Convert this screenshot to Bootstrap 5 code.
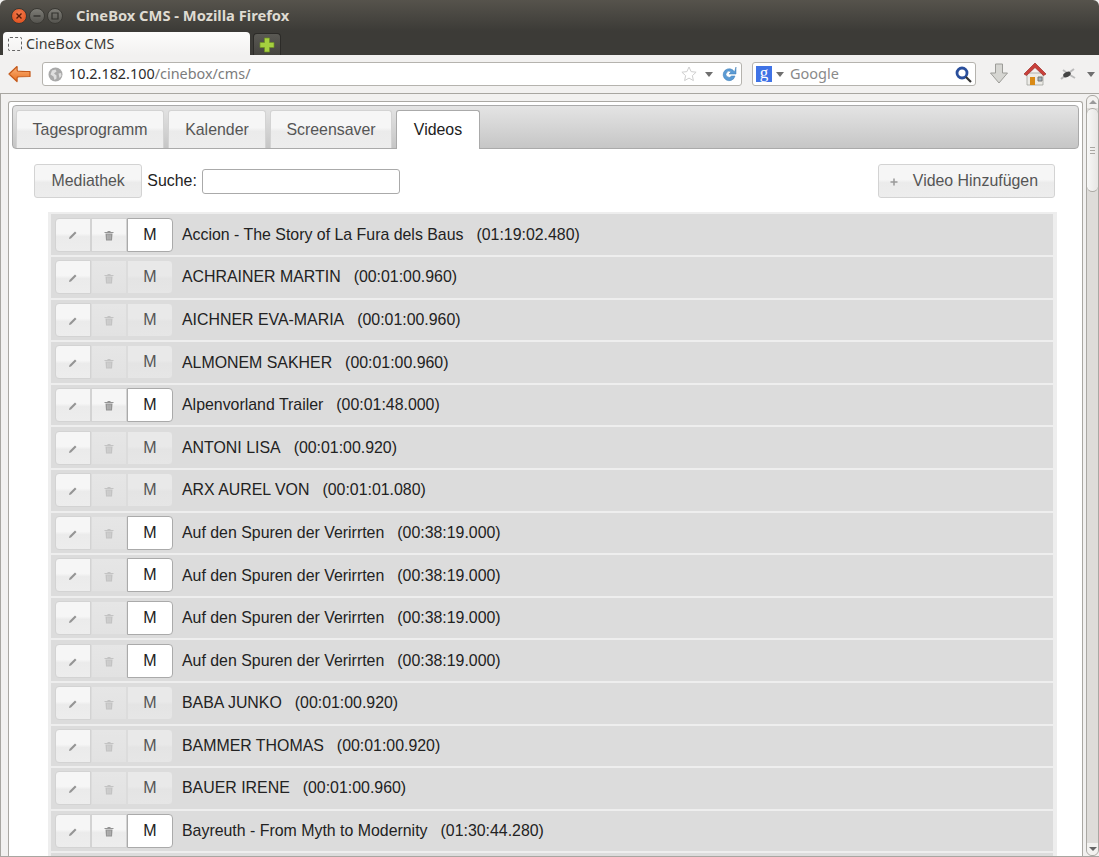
<!DOCTYPE html>
<html lang="de">
<head>
<meta charset="UTF-8" />
<title>CineBox CMS - Mozilla Firefox</title>
<link href="https://cdn.jsdelivr.net/npm/bootstrap@5.3.0/dist/css/bootstrap.min.css" rel="stylesheet" />
<style>
  html, body { height: 857px; overflow: hidden; }
  body { font-family: "Liberation Sans", Arial, sans-serif; font-size: 15.9px; color: #222; background: #f2f1f0; }

  /* window chrome */
  .win-title { height: 31px; background: linear-gradient(#56534c, #3c3b37); padding-left: 11px; gap: 2px; border-top-left-radius: 6px; border-top-right-radius: 6px; }
  .win-dot { width: 16px; height: 16px; border-radius: 50%; background: linear-gradient(#7d7c76, #55544f); border: 1px solid #3a3934; }
  .win-dot.is-close { background: radial-gradient(circle at 50% 35%, #f27c4f, #dd4814); }
  .win-name { font-family: "Noto Sans", "DejaVu Sans", sans-serif; font-weight: 700; font-size: 14.7px; color: #dfdbd2; margin-left: 11px; }
  .tab-strip { height: 24px; background: #3c3b37; padding-left: 3px; gap: 3px; align-items: flex-end; }
  .ff-tab { width: 247px; height: 23px; background: linear-gradient(#fdfdfc, #f2f1f0); border-radius: 4px 4px 0 0; font-family: "Noto Sans", "DejaVu Sans", sans-serif; font-size: 14.3px; color: #3c3b37; padding-left: 5px; gap: 4px; }
  .ff-fav { width: 14px; height: 14px; border: 1px dashed #666; border-radius: 2px; }
  .ff-new { width: 28px; height: 22px; background: linear-gradient(#5a5954, #45443f); border: 1px solid #2c2b28; border-bottom: 0; border-radius: 4px 4px 0 0; }
  .ff-bar { height: 39px; background: #f2f1f0; border-bottom: 1px solid #a8a6a1; padding-left: 8px; }
  .ff-url { width: 700px; height: 24px; margin-left: 11px; background: #fff; border: 1px solid #b5b3ae; border-radius: 3px; font-family: "Noto Sans", "DejaVu Sans", sans-serif; font-size: 14.4px; padding: 0 4px 0 5px; color: #2d2d2d; }
  .ff-url .url-rest { color: #7c7c7c; margin: 0; }
  .url-text { margin-left: 2px; }
  .ff-search { width: 224px; height: 24px; margin-left: 10px; background: #fff; border: 1px solid #b5b3ae; border-radius: 3px; font-family: "Noto Sans", "DejaVu Sans", sans-serif; font-size: 14.5px; color: #8a8a8a; padding: 0 3px; }
  .search-name { margin-left: 6px; }
  .ff-g { width: 16px; height: 16px; background: #3f73e6; color: #fff; font: 400 17px/13px "Liberation Serif", serif; text-align: center; }
  .ff-drop { width: 0; height: 0; border-left: 4px solid transparent; border-right: 4px solid transparent; border-top: 5px solid #6f6f6f; }
  .ico-dl { margin-left: 14px; }
  .ico-home { margin-left: 15px; }
  .ico-bug { margin-left: 12px; }
  .ico-more { margin-left: 10px; }

  /* page frame */
  .ff-content { height: 763px; background: #f2f1f0; border-left: 1px solid #a8a6a1; border-bottom: 1px solid #a8a6a1; padding-left: 7px; }
  .ff-frame { flex: 0 0 1075px; margin-top: 7px; background: #fff; border: 1px solid #aaa8a3; border-bottom: 0; border-radius: 3px 3px 0 0; padding: 3px 3px 0 3px; overflow: hidden; }
  .ff-scroll { width: 13px; margin: 1px 0 0 3px; border: 1px solid #aaa8a3; border-radius: 6px; background: #dedcd9; }
  .ff-scroll-end { height: 12px; background: #f3f2f0; }
  .ff-scroll-thumb { height: 84px; background: linear-gradient(90deg, #f7f7f6, #e7e6e4); border: 1px solid #aaa8a3; border-width: 1px 0; border-radius: 6px; }
  .ff-grip { width: 5px; height: 7px; margin-top: 38px; background: repeating-linear-gradient(#a9a7a2 0 1px, transparent 1px 3px); }
  .ff-up, .ff-down { width: 0; height: 0; border-left: 4px solid transparent; border-right: 4px solid transparent; }
  .ff-up { border-bottom: 4px solid #9a9a9a; }
  .ff-down { border-top: 4px solid #666; }

  /* app */
  .tab-panel { height: 44px; background: linear-gradient(#e4e4e4, #c6c6c6); border: 1px solid #aaa; border-radius: 4px; padding: 4px 0 0 3px; gap: 4px; }
  .app-tab, .app-btn { background: linear-gradient(#f6f6f6 45%, #ebebeb 55%, #ededed); border: 1px solid #d3d3d3; color: #555; font-size: 15.9px; }
  .app-tab { height: 38px; border-bottom: 0; border-radius: 3px 3px 0 0; line-height: 37px; text-align: center; }
  .app-tab:nth-child(1) { width: 148px; }
  .app-tab:nth-child(2) { width: 98px; }
  .app-tab:nth-child(3) { width: 122px; }
  .app-tab:nth-child(4) { width: 84px; }
  .app-tab.is-on { height: 39px; background: #fff; border: 1px solid #aaa; border-bottom: 0; color: #212121; }
  .tool-row { margin: 15px 0 14px 22px; width: 1021px; height: 34px; }
  .app-btn { height: 34px; padding: 0 16.5px; border-radius: 3px; }
  .app-btn.with-icon { padding: 0 16px 0 11px; }
  .app-btn.with-icon svg { margin-right: 10px; }
  .search-label { margin-left: 5px; }
  .search-box { width: 198px; height: 25px; min-height: 0; padding: 0 4px; border: 1px solid #aaa; border-radius: 3px; margin-left: 5px; }
  .video-list { margin-left: 36px; width: 1009px; background: #eee; padding: 2px 4px 0 3px; }
  .video-row { height: 40.6px; margin-bottom: 2px; background: #dcdcdc; padding-left: 4px; color: #222; }
  .video-row:first-child { height: 41px; }
  .row-tools { width: 118px; height: 34px; margin-right: 9px; }
  .row-tool { width: 36px; height: 34px; padding: 0; border: 1px solid #d3d3d3; background: linear-gradient(#f6f6f6 45%, #ebebeb 55%, #ededed); border-radius: 0; }
  .row-tool:first-child { border-radius: 4px 0 0 4px; }
  .row-tool.is-off { background: linear-gradient(#e6e6e6, #e2e2e2); border-color: #dcdcdc; }
  .row-tool.is-off svg { opacity: .4; }
  .row-m { width: 46px; height: 34px; padding: 0; font-size: 16px; color: #555; background: linear-gradient(#e9e9e9 45%, #e4e4e4 55%, #e6e6e6); border: 1px solid #dcdcdc; border-radius: 0 4px 4px 0; }
  .row-m.is-on { background: #fff; border-color: #aaa; color: #212121; }
  .row-time { margin-left: 13px; }
</style>
</head>
<body>
  <div class="win-title d-flex align-items-center">
    <span class="win-dot is-close d-flex align-items-center justify-content-center">
      <svg width="8" height="8" viewBox="0 0 8 8"><path d="M1.500 1.500l5 5M6.500 1.500l-5 5" stroke="#5a1c08" stroke-width="1.400"/></svg>
    </span>
    <span class="win-dot d-flex align-items-center justify-content-center">
      <svg width="8" height="8" viewBox="0 0 8 8"><path d="M.5 4h7" stroke="#33322e" stroke-width="1.400"/></svg>
    </span>
    <span class="win-dot d-flex align-items-center justify-content-center">
      <svg width="8" height="8" viewBox="0 0 8 8"><path d="M1 1h6v6H1z" fill="none" stroke="#33322e" stroke-width="1.200"/></svg>
    </span>
    <span class="win-name">CineBox CMS - Mozilla Firefox</span>
  </div>
  <div class="tab-strip d-flex">
    <div class="ff-tab d-flex align-items-center"><span class="ff-fav"></span>CineBox CMS</div>
    <div class="ff-new d-flex align-items-center justify-content-center">
      <svg width="16" height="16" viewBox="0 0 16 16"><path d="M5.500 1h5v4.500h4.500v5h-4.500v4.500h-5v-4.500h-4.500v-5h4.500z" fill="#a5d03f" stroke="#6d8f22" stroke-width=".7"/></svg>
    </div>
  </div>
  <div class="ff-bar d-flex align-items-center">
    <svg width="23" height="18" viewBox="0 0 23 18">
      <defs><linearGradient id="backFill" x1="0" y1="0" x2="0" y2="1"><stop offset="0" stop-color="#fbb27a"/><stop offset="1" stop-color="#e8701f"/></linearGradient></defs>
      <path d="M9 1.500 1 9l8 7.500c.5-2-.5-3 .5-4.500 4-.5 8-.5 12.500-.5v-5c-4.500 0-8.500 0-12.500-.5-1-1.500 0-2.500-.5-4.500z" fill="url(#backFill)" stroke="#c4591a" stroke-width="1.200" stroke-linejoin="round"/>
    </svg>
    <div class="ff-url d-flex align-items-center">
      <svg class="me-1" width="15" height="15" viewBox="0 0 15 15"><circle cx="7.500" cy="7.500" r="7" fill="#a9a9a9"/><path d="M4 3.500 7.500 2.500l1 2-2.500 2 2.500 2v3l-2 1.500-1-3.500-3-2zM10.500 6.500l2.500-.5.500 3-2 2z" fill="#dedede"/></svg>
      <span class="url-text">10.2.182.100<span class="url-rest">/cinebox/cms/</span></span>
      <span class="ms-auto d-flex align-items-center gap-2">
        <svg width="16" height="16" viewBox="0 0 16 16"><path d="M8 1l2.100 4.600 5 .6-3.700 3.400 1 5L8 12.100 3.600 14.600l1-5L.9 6.200l5-.6z" fill="#fff" stroke="#cfcfcf"/></svg>
        <span class="ff-drop"></span>
        <svg width="16" height="16" viewBox="0 0 16 16"><path d="M13.500 6A6 6 0 1 0 14 10h-3.500A3 3 0 1 1 10 6L8 8h7V1z" fill="#5b9bd5" stroke="#3f7cb5" stroke-width=".5"/></svg>
      </span>
    </div>
    <div class="ff-search d-flex align-items-center">
      <span class="ff-g">g</span>
      <span class="ff-drop ms-1"></span>
      <span class="search-name">Google</span>
      <svg class="ms-auto" width="17" height="17" viewBox="0 0 17 17"><circle cx="7" cy="7" r="5" fill="#fff" stroke="#2a4f9c" stroke-width="2.800"/><path d="M11 11l5 5" stroke="#333" stroke-width="2.200"/></svg>
    </div>
    <svg class="ico-dl" width="18" height="22" viewBox="0 0 18 22"><path d="M5.500 1h7v9h5L9 20 .5 10h5z" fill="#d6d6d2" stroke="#9c9c98"/></svg>
    <svg class="ico-home" width="24" height="24" viewBox="0 0 24 24"><path d="M4 11h16v12H4z" fill="#ecebe6" stroke="#9a9a94" stroke-width=".7"/><path d="M12 1 1 12l2.500 1.500L12 5.500l8.500 8L23 12z" fill="#c9403a" stroke="#9c2b27" stroke-width=".7"/><path d="M7 15h5v8H7z" fill="#d98a16"/><path d="M15 15h4v4h-4z" fill="#9fb2bb" stroke="#777"/></svg>
    <svg class="ico-bug" width="18" height="14" viewBox="0 0 18 14"><path d="M2 12 7 8M4 3l4 3M16 11l-5-3M15 2 11 5" stroke="#bbb" stroke-width="2"/><ellipse cx="8" cy="7.500" rx="4" ry="2.500" transform="rotate(-25 8 7.500)" fill="#444"/></svg>
    <span class="ff-drop ico-more"></span>
  </div>

  <div class="ff-content d-flex">
    <div class="ff-frame">
      <div class="tab-panel d-flex">
        <div class="app-tab">Tagesprogramm</div>
        <div class="app-tab">Kalender</div>
        <div class="app-tab">Screensaver</div>
        <div class="app-tab is-on">Videos</div>
      </div>
      <div class="tool-row d-flex align-items-center">
        <button class="app-btn" type="button">Mediathek</button>
        <label class="search-label" for="videoSearch">Suche:</label>
        <input class="search-box" id="videoSearch" type="text" />
        <button class="app-btn with-icon ms-auto" type="button">
          <svg width="8" height="8" viewBox="0 0 8 8"><path d="M4 .5v7M.5 4h7" stroke="#999" stroke-width="1.500"/></svg>
          Video Hinzufügen
        </button>
      </div>
      <div class="video-list" id="videoList"></div>
    </div>
    <div class="ff-scroll d-flex flex-column">
      <div class="ff-scroll-end d-flex align-items-center justify-content-center rounded-top"><span class="ff-up"></span></div>
      <div class="ff-scroll-thumb d-flex justify-content-center"><span class="ff-grip"></span></div>
      <div class="flex-grow-1"></div>
      <div class="ff-scroll-end d-flex align-items-center justify-content-center rounded-bottom"><span class="ff-down"></span></div>
    </div>
  </div>

  <script>
    const pencil = '<svg width="10" height="10" viewBox="0 0 10 10"><path d="M1 9l.5-2 5.500-5.500 1.500 1.500L3 8.500z" fill="#949494"/></svg>';
    const trash = '<svg width="10" height="11" viewBox="0 0 10 11"><path d="M.5 2h9v1h-9zM3.500 1h3v1h-3zM1.500 3.500h7l-.5 7H2z" fill="#949494"/><path d="M3.700 4.500v5M5 4.500v5M6.300 4.500v5" stroke="#d4d4d4" stroke-width=".5"/></svg>';
    // title, time, delete enabled, M active
    const videos = [
      ["Accion - The Story of La Fura dels Baus", "01:19:02.480", 1, 1],
      ["ACHRAINER MARTIN", "00:01:00.960", 0, 0],
      ["AICHNER EVA-MARIA", "00:01:00.960", 0, 0],
      ["ALMONEM SAKHER", "00:01:00.960", 0, 0],
      ["Alpenvorland Trailer", "00:01:48.000", 1, 1],
      ["ANTONI LISA", "00:01:00.920", 0, 0],
      ["ARX AUREL VON", "00:01:01.080", 0, 0],
      ["Auf den Spuren der Verirrten", "00:38:19.000", 0, 1],
      ["Auf den Spuren der Verirrten", "00:38:19.000", 0, 1],
      ["Auf den Spuren der Verirrten", "00:38:19.000", 0, 1],
      ["Auf den Spuren der Verirrten", "00:38:19.000", 0, 1],
      ["BABA JUNKO", "00:01:00.920", 0, 0],
      ["BAMMER THOMAS", "00:01:00.920", 0, 0],
      ["BAUER IRENE", "00:01:00.960", 0, 0],
      ["Bayreuth - From Myth to Modernity", "01:30:44.280", 1, 1],
      ["", "", 0, 0],
    ];
    document.getElementById("videoList").innerHTML = videos.map((v) => `
      <div class="video-row d-flex align-items-center">
        ${v[0] ? `<div class="btn-group row-tools">
          <button class="row-tool" type="button">${pencil}</button>
          <button class="row-tool ${v[2] ? "" : "is-off"}" type="button">${trash}</button>
          <button class="row-m ${v[3] ? "is-on" : ""}" type="button">M</button>
        </div>
        <span>${v[0]}</span><span class="row-time">(${v[1]})</span>` : ""}
      </div>`).join("");
  </script>
  <script src="https://cdn.jsdelivr.net/npm/bootstrap@5.3.0/dist/js/bootstrap.bundle.min.js"></script>
</body>
</html>
